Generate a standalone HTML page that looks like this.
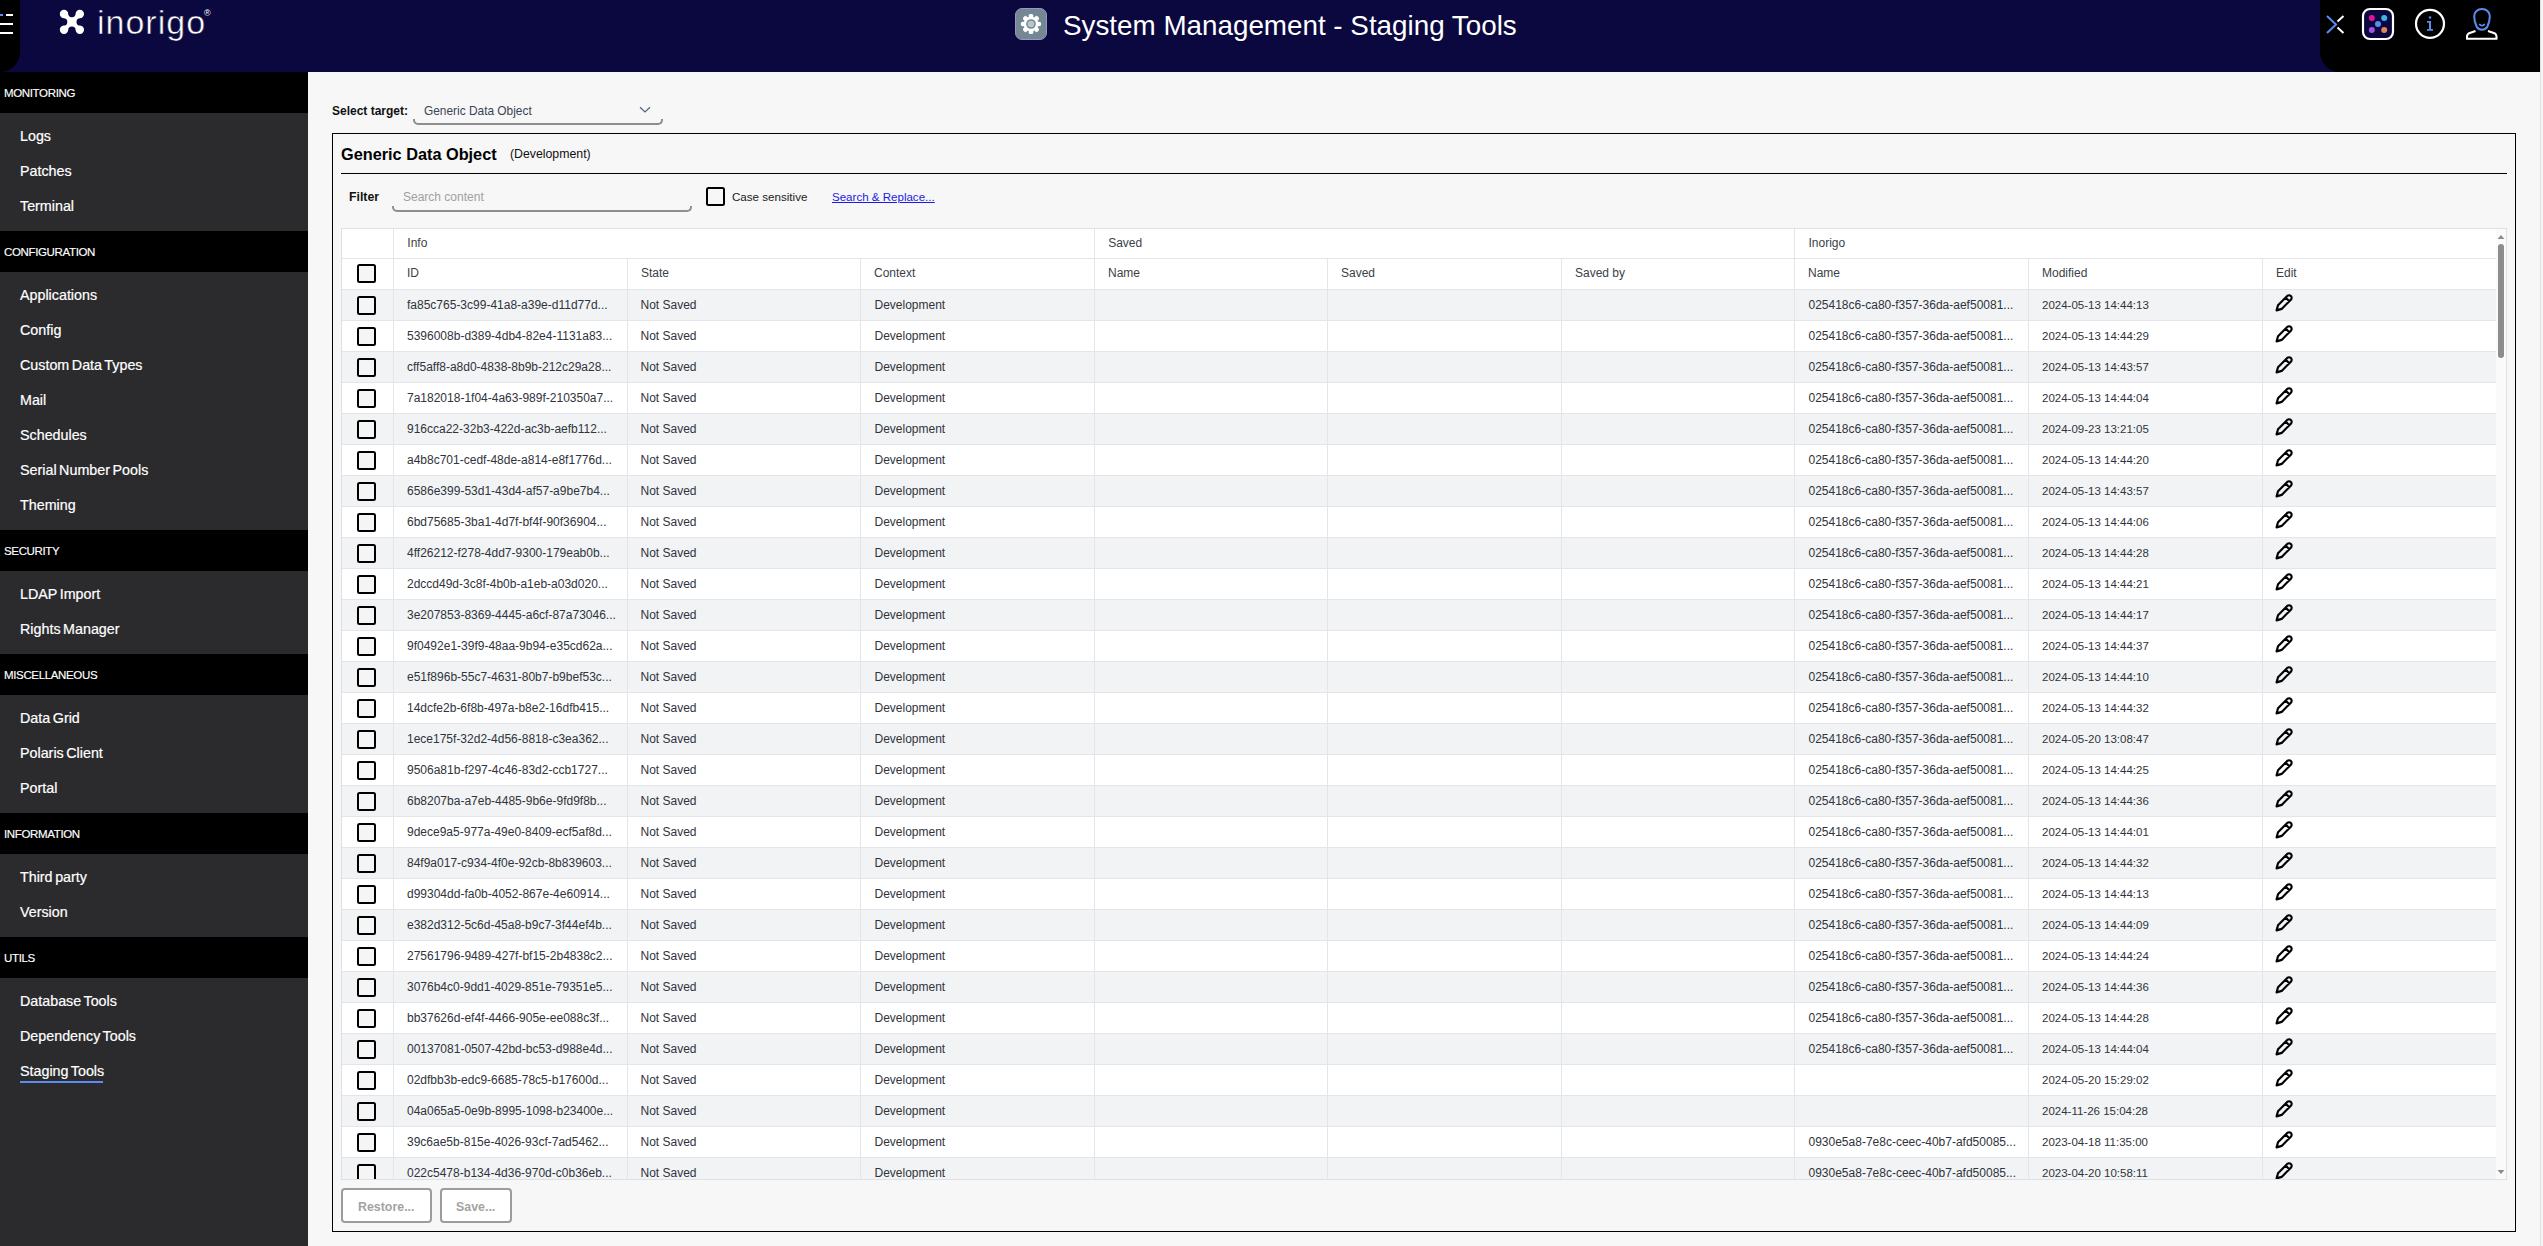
<!DOCTYPE html><html><head><meta charset="utf-8"><title>System Management - Staging Tools</title><style>
*{box-sizing:border-box;margin:0;padding:0}
html,body{width:2543px;height:1246px;overflow:hidden;background:#f7f7f7;font-family:"Liberation Sans",sans-serif;}
.a{position:absolute}
#hdr{left:0;top:0;width:2543px;height:72px;background:#0b0840}
#ltab{left:0;top:0;width:20px;height:72px;background:#000;border-bottom-right-radius:20px}
#rtab{left:2320px;top:0;width:220px;height:72px;background:#000;border-bottom-left-radius:20px}
#rstrip{left:2540px;top:0;width:3px;height:1246px;background:#f4f4f4;border-left:1px solid #e2e2e2}
.logo-t{left:97px;top:-2.8px;font-size:34px;color:#fff;letter-spacing:1px;font-weight:normal;line-height:50px;-webkit-text-stroke:0.55px #0b0840}
.title{left:1063px;top:9px;font-size:27.8px;color:#fff;line-height:34px;white-space:nowrap}
#side{left:0;top:72px;width:308px;height:1174px;background:#2b2b2d}
.sh{position:absolute;left:0;width:308px;height:41px;background:#000;color:#fff;font-size:11.5px;line-height:42px;padding-left:4px;letter-spacing:-0.35px;-webkit-text-stroke:0.15px #fff}
.si{position:absolute;left:20px;color:#fff;font-size:14.3px;word-spacing:-1.4px;-webkit-text-stroke:0.2px #fff;line-height:35px;white-space:nowrap}
.lbl{font-weight:bold;color:#111}
.cell{position:absolute;font-size:12px;color:#2f333b;white-space:nowrap;line-height:31px}
.hc{position:absolute;font-size:12px;color:#3b3f48;white-space:nowrap;line-height:30px}
.vl{position:absolute;width:1px;background:#e3e5ea}
.hl{position:absolute;height:1px;background:#e3e5ea}
.cb{position:absolute;width:19px;height:19px;border:2px solid #000;border-radius:2.5px;background:#f5f5f5}
</style></head><body>
<div id="hdr" class="a"></div>
<div id="ltab" class="a"></div>
<div class="a" style="left:0;top:14px;width:3px;height:2px;background:#5b8def"></div>
<div class="a" style="left:6px;top:14px;width:7px;height:2px;background:#fff"></div>
<div class="a" style="left:0;top:23px;width:13px;height:2px;background:#fff"></div>
<div class="a" style="left:0;top:32px;width:13px;height:2px;background:#fff"></div>
<svg class="a" style="left:54px;top:4px" width="40" height="40" viewBox="0 0 40 40">
<g fill="#fff" stroke="none"><circle cx="10" cy="10" r="4.2"/><circle cx="25.8" cy="10" r="4.2"/><circle cx="10" cy="25.8" r="4.2"/><circle cx="25.8" cy="25.8" r="4.2"/></g>
<g stroke="#fff" stroke-width="7" stroke-linecap="round"><line x1="10" y1="10" x2="25.8" y2="25.8"/><line x1="25.8" y1="10" x2="10" y2="25.8"/></g><g fill="#0b0840"><circle cx="17.9" cy="9.6" r="3.7"/><circle cx="9.6" cy="17.9" r="3.7"/><circle cx="26.2" cy="17.9" r="3.7"/><circle cx="17.9" cy="26.2" r="3.7"/></g></svg>
<div class="a logo-t">inorigo</div>
<div class="a" style="left:204px;top:7.5px;font-size:9px;color:#fff">&#174;</div>
<svg class="a" style="left:1014px;top:7px" width="34" height="34" viewBox="0 0 34 34">
<rect x="1.5" y="1.5" width="31" height="31" rx="6.5" fill="#738894" stroke="#9b95bd" stroke-width="1"/>
<g transform="translate(17,17)" fill="#fff">
<circle r="7.3"/>
<g id="tooth"><rect x="-2.3" y="-10.1" width="4.6" height="5" rx="1.7"/></g>
<use href="#tooth" transform="rotate(45)"/><use href="#tooth" transform="rotate(90)"/><use href="#tooth" transform="rotate(135)"/>
<use href="#tooth" transform="rotate(180)"/><use href="#tooth" transform="rotate(225)"/><use href="#tooth" transform="rotate(270)"/><use href="#tooth" transform="rotate(315)"/>
<circle r="4.8" fill="#738894"/><circle r="3.3" fill="#b9c4cb"/>
</g></svg>
<div class="a title">System Management - Staging Tools</div>
<div id="rtab" class="a"></div>
<svg class="a" style="left:2320px;top:0" width="220" height="50" viewBox="0 0 220 50">
<g stroke-width="2" fill="none">
<path d="M7 16 L16 24.5 L7 33" stroke="#5b8def"/>
<path d="M23.5 16 L17.5 21.5 M17.5 27.5 L23.5 33" stroke="#fff"/>
<rect x="43" y="9" width="30" height="30" rx="7" stroke="#fff" stroke-width="2.2" fill="#0b0840"/>
<circle cx="110" cy="23.8" r="14" stroke="#fff" stroke-width="2.2"/>
<path d="M156.6 26.5 C155 23 154.2 19 154.2 16.5 C154.2 11.8 157.6 8.9 162 8.9 C166.4 8.9 169.8 11.8 169.8 16.5 C169.8 19 169 23 167.4 26.5 C165.2 30.8 158.8 30.8 156.6 26.5 Z" stroke="#5b8def" stroke-width="2"/>
<path d="M159.2 24 Q162 27.3 164.8 24" stroke="#5b8def" stroke-width="1.8"/>
<path d="M155.5 31 L148.5 33.5 Q146.5 35 147 38.8 L176.5 38.8 Q177 35 175 33.5 L168 31" stroke="#fff" stroke-width="2"/>
</g>
<g stroke="none">
<circle cx="51.8" cy="18" r="3" fill="#e0139a"/><circle cx="64.2" cy="18" r="3" fill="#3db5e0"/>
<circle cx="58" cy="24" r="3" fill="#5b8def"/>
<circle cx="51.8" cy="30" r="3" fill="#a652e0"/><circle cx="64.2" cy="30" r="3" fill="#e08558"/>
<circle cx="110" cy="17.5" r="1.3" fill="#5b8def"/>
<path d="M107 21 L111 21 L111 29 L113 29 L113 30.8 L107 30.8 L107 29 L109 29 L109 22.8 L107 22.8 Z" fill="#5b8def"/>
</g></svg>
<div id="rstrip" class="a"></div>
<div id="side" class="a"></div>
<div class="sh" style="top:72.0px">MONITORING</div>
<div class="si" style="top:118.7px">Logs</div>
<div class="si" style="top:153.7px">Patches</div>
<div class="si" style="top:188.7px">Terminal</div>
<div class="sh" style="top:231.0px">CONFIGURATION</div>
<div class="si" style="top:277.7px">Applications</div>
<div class="si" style="top:312.7px">Config</div>
<div class="si" style="top:347.7px">Custom Data Types</div>
<div class="si" style="top:382.7px">Mail</div>
<div class="si" style="top:417.7px">Schedules</div>
<div class="si" style="top:452.7px">Serial Number Pools</div>
<div class="si" style="top:487.7px">Theming</div>
<div class="sh" style="top:530.0px">SECURITY</div>
<div class="si" style="top:576.7px">LDAP Import</div>
<div class="si" style="top:611.7px">Rights Manager</div>
<div class="sh" style="top:654.0px">MISCELLANEOUS</div>
<div class="si" style="top:700.7px">Data Grid</div>
<div class="si" style="top:735.7px">Polaris Client</div>
<div class="si" style="top:770.7px">Portal</div>
<div class="sh" style="top:813.0px">INFORMATION</div>
<div class="si" style="top:859.7px">Third party</div>
<div class="si" style="top:894.7px">Version</div>
<div class="sh" style="top:937.0px">UTILS</div>
<div class="si" style="top:983.7px">Database Tools</div>
<div class="si" style="top:1018.7px">Dependency Tools</div>
<div class="si" style="top:1053.7px">Staging Tools</div>
<div class="a" style="left:20px;top:1081.0px;width:83px;height:2px;background:#5b8def"></div>
<div class="a lbl" style="left:332px;top:103px;font-size:12px;line-height:16px">Select target:</div>
<div class="a" style="left:424px;top:103px;font-size:11.9px;line-height:16px;color:#3a4454">Generic Data Object</div>
<svg class="a" style="left:639px;top:106px" width="12" height="8" viewBox="0 0 12 8"><path d="M1 1.2 L6 6 L11 1.2" stroke="#56647c" stroke-width="1.2" fill="none"/></svg>
<div class="a" style="left:413px;top:119px;width:250px;height:6px;border:2px solid #8e8e8e;border-top:none;border-radius:0 0 5px 5px"></div>
<div class="a" style="left:332px;top:133px;width:2184px;height:1099px;border:1px solid #000"></div>
<div class="a" style="left:341px;top:143px;font-size:16.3px;font-weight:bold;color:#000;line-height:22px">Generic Data Object</div>
<div class="a" style="left:510px;top:145px;font-size:12.3px;color:#111;line-height:18px">(Development)</div>
<div class="a" style="left:341px;top:173px;width:2166px;height:1px;background:#000"></div>
<div class="a lbl" style="left:349px;top:189px;font-size:12.3px;line-height:16px">Filter</div>
<div class="a" style="left:403px;top:189px;font-size:12px;line-height:16px;color:#a0a0a0">Search content</div>
<div class="a" style="left:392px;top:206px;width:300px;height:6px;border:2px solid #8e8e8e;border-top:none;border-radius:0 0 5px 5px"></div>
<div class="a" style="left:706px;top:187px;width:19px;height:19px;border:2px solid #000;border-radius:2.5px"></div>
<div class="a" style="left:732px;top:189px;font-size:11.6px;line-height:16px;color:#222">Case sensitive</div>
<div class="a" style="left:832px;top:189px;font-size:11.55px;line-height:16px;color:#1a1ae6;text-decoration:underline">Search &amp; Replace...</div>
<div class="a" style="left:341px;top:228px;width:2166px;height:952px;background:#fff;border:1px solid #dde1e7;overflow:hidden">
<div class="a" style="left:0;top:60px;width:2154px;height:31px;background:#f2f3f5"></div>
<div class="hl" style="left:0;top:60px;width:2154px"></div>
<div class="cb" style="left:15px;top:67px"></div>
<div class="cell" style="left:65px;top:61px">fa85c765-3c99-41a8-a39e-d11d77d...</div>
<div class="cell" style="left:298.5px;top:61px">Not Saved</div>
<div class="cell" style="left:532.5px;top:61px">Development</div>
<div class="cell" style="left:1466.5px;top:61px">025418c6-ca80-f357-36da-aef50081...</div>
<div class="cell" style="left:1700px;top:61px;font-size:11.5px">2024-05-13 14:44:13</div>
<svg class="a" style="left:1933px;top:65px" width="18" height="18" viewBox="0 0 18 18"><path d="M1.6 16.4 L3 11.2 L12.2 2 A2.3 2.3 0 0 1 15.9 5.7 L6.7 14.9 Z M10.6 3.6 L14.3 7.3" stroke="#000" stroke-width="2.15" fill="none" stroke-linejoin="round"/></svg>
<div class="a" style="left:0;top:91px;width:2154px;height:31px;background:#fff"></div>
<div class="hl" style="left:0;top:91px;width:2154px"></div>
<div class="cb" style="left:15px;top:98px"></div>
<div class="cell" style="left:65px;top:92px">5396008b-d389-4db4-82e4-1131a83...</div>
<div class="cell" style="left:298.5px;top:92px">Not Saved</div>
<div class="cell" style="left:532.5px;top:92px">Development</div>
<div class="cell" style="left:1466.5px;top:92px">025418c6-ca80-f357-36da-aef50081...</div>
<div class="cell" style="left:1700px;top:92px;font-size:11.5px">2024-05-13 14:44:29</div>
<svg class="a" style="left:1933px;top:96px" width="18" height="18" viewBox="0 0 18 18"><path d="M1.6 16.4 L3 11.2 L12.2 2 A2.3 2.3 0 0 1 15.9 5.7 L6.7 14.9 Z M10.6 3.6 L14.3 7.3" stroke="#000" stroke-width="2.15" fill="none" stroke-linejoin="round"/></svg>
<div class="a" style="left:0;top:122px;width:2154px;height:31px;background:#f2f3f5"></div>
<div class="hl" style="left:0;top:122px;width:2154px"></div>
<div class="cb" style="left:15px;top:129px"></div>
<div class="cell" style="left:65px;top:123px">cff5aff8-a8d0-4838-8b9b-212c29a28...</div>
<div class="cell" style="left:298.5px;top:123px">Not Saved</div>
<div class="cell" style="left:532.5px;top:123px">Development</div>
<div class="cell" style="left:1466.5px;top:123px">025418c6-ca80-f357-36da-aef50081...</div>
<div class="cell" style="left:1700px;top:123px;font-size:11.5px">2024-05-13 14:43:57</div>
<svg class="a" style="left:1933px;top:127px" width="18" height="18" viewBox="0 0 18 18"><path d="M1.6 16.4 L3 11.2 L12.2 2 A2.3 2.3 0 0 1 15.9 5.7 L6.7 14.9 Z M10.6 3.6 L14.3 7.3" stroke="#000" stroke-width="2.15" fill="none" stroke-linejoin="round"/></svg>
<div class="a" style="left:0;top:153px;width:2154px;height:31px;background:#fff"></div>
<div class="hl" style="left:0;top:153px;width:2154px"></div>
<div class="cb" style="left:15px;top:160px"></div>
<div class="cell" style="left:65px;top:154px">7a182018-1f04-4a63-989f-210350a7...</div>
<div class="cell" style="left:298.5px;top:154px">Not Saved</div>
<div class="cell" style="left:532.5px;top:154px">Development</div>
<div class="cell" style="left:1466.5px;top:154px">025418c6-ca80-f357-36da-aef50081...</div>
<div class="cell" style="left:1700px;top:154px;font-size:11.5px">2024-05-13 14:44:04</div>
<svg class="a" style="left:1933px;top:158px" width="18" height="18" viewBox="0 0 18 18"><path d="M1.6 16.4 L3 11.2 L12.2 2 A2.3 2.3 0 0 1 15.9 5.7 L6.7 14.9 Z M10.6 3.6 L14.3 7.3" stroke="#000" stroke-width="2.15" fill="none" stroke-linejoin="round"/></svg>
<div class="a" style="left:0;top:184px;width:2154px;height:31px;background:#f2f3f5"></div>
<div class="hl" style="left:0;top:184px;width:2154px"></div>
<div class="cb" style="left:15px;top:191px"></div>
<div class="cell" style="left:65px;top:185px">916cca22-32b3-422d-ac3b-aefb112...</div>
<div class="cell" style="left:298.5px;top:185px">Not Saved</div>
<div class="cell" style="left:532.5px;top:185px">Development</div>
<div class="cell" style="left:1466.5px;top:185px">025418c6-ca80-f357-36da-aef50081...</div>
<div class="cell" style="left:1700px;top:185px;font-size:11.5px">2024-09-23 13:21:05</div>
<svg class="a" style="left:1933px;top:189px" width="18" height="18" viewBox="0 0 18 18"><path d="M1.6 16.4 L3 11.2 L12.2 2 A2.3 2.3 0 0 1 15.9 5.7 L6.7 14.9 Z M10.6 3.6 L14.3 7.3" stroke="#000" stroke-width="2.15" fill="none" stroke-linejoin="round"/></svg>
<div class="a" style="left:0;top:215px;width:2154px;height:31px;background:#fff"></div>
<div class="hl" style="left:0;top:215px;width:2154px"></div>
<div class="cb" style="left:15px;top:222px"></div>
<div class="cell" style="left:65px;top:216px">a4b8c701-cedf-48de-a814-e8f1776d...</div>
<div class="cell" style="left:298.5px;top:216px">Not Saved</div>
<div class="cell" style="left:532.5px;top:216px">Development</div>
<div class="cell" style="left:1466.5px;top:216px">025418c6-ca80-f357-36da-aef50081...</div>
<div class="cell" style="left:1700px;top:216px;font-size:11.5px">2024-05-13 14:44:20</div>
<svg class="a" style="left:1933px;top:220px" width="18" height="18" viewBox="0 0 18 18"><path d="M1.6 16.4 L3 11.2 L12.2 2 A2.3 2.3 0 0 1 15.9 5.7 L6.7 14.9 Z M10.6 3.6 L14.3 7.3" stroke="#000" stroke-width="2.15" fill="none" stroke-linejoin="round"/></svg>
<div class="a" style="left:0;top:246px;width:2154px;height:31px;background:#f2f3f5"></div>
<div class="hl" style="left:0;top:246px;width:2154px"></div>
<div class="cb" style="left:15px;top:253px"></div>
<div class="cell" style="left:65px;top:247px">6586e399-53d1-43d4-af57-a9be7b4...</div>
<div class="cell" style="left:298.5px;top:247px">Not Saved</div>
<div class="cell" style="left:532.5px;top:247px">Development</div>
<div class="cell" style="left:1466.5px;top:247px">025418c6-ca80-f357-36da-aef50081...</div>
<div class="cell" style="left:1700px;top:247px;font-size:11.5px">2024-05-13 14:43:57</div>
<svg class="a" style="left:1933px;top:251px" width="18" height="18" viewBox="0 0 18 18"><path d="M1.6 16.4 L3 11.2 L12.2 2 A2.3 2.3 0 0 1 15.9 5.7 L6.7 14.9 Z M10.6 3.6 L14.3 7.3" stroke="#000" stroke-width="2.15" fill="none" stroke-linejoin="round"/></svg>
<div class="a" style="left:0;top:277px;width:2154px;height:31px;background:#fff"></div>
<div class="hl" style="left:0;top:277px;width:2154px"></div>
<div class="cb" style="left:15px;top:284px"></div>
<div class="cell" style="left:65px;top:278px">6bd75685-3ba1-4d7f-bf4f-90f36904...</div>
<div class="cell" style="left:298.5px;top:278px">Not Saved</div>
<div class="cell" style="left:532.5px;top:278px">Development</div>
<div class="cell" style="left:1466.5px;top:278px">025418c6-ca80-f357-36da-aef50081...</div>
<div class="cell" style="left:1700px;top:278px;font-size:11.5px">2024-05-13 14:44:06</div>
<svg class="a" style="left:1933px;top:282px" width="18" height="18" viewBox="0 0 18 18"><path d="M1.6 16.4 L3 11.2 L12.2 2 A2.3 2.3 0 0 1 15.9 5.7 L6.7 14.9 Z M10.6 3.6 L14.3 7.3" stroke="#000" stroke-width="2.15" fill="none" stroke-linejoin="round"/></svg>
<div class="a" style="left:0;top:308px;width:2154px;height:31px;background:#f2f3f5"></div>
<div class="hl" style="left:0;top:308px;width:2154px"></div>
<div class="cb" style="left:15px;top:315px"></div>
<div class="cell" style="left:65px;top:309px">4ff26212-f278-4dd7-9300-179eab0b...</div>
<div class="cell" style="left:298.5px;top:309px">Not Saved</div>
<div class="cell" style="left:532.5px;top:309px">Development</div>
<div class="cell" style="left:1466.5px;top:309px">025418c6-ca80-f357-36da-aef50081...</div>
<div class="cell" style="left:1700px;top:309px;font-size:11.5px">2024-05-13 14:44:28</div>
<svg class="a" style="left:1933px;top:313px" width="18" height="18" viewBox="0 0 18 18"><path d="M1.6 16.4 L3 11.2 L12.2 2 A2.3 2.3 0 0 1 15.9 5.7 L6.7 14.9 Z M10.6 3.6 L14.3 7.3" stroke="#000" stroke-width="2.15" fill="none" stroke-linejoin="round"/></svg>
<div class="a" style="left:0;top:339px;width:2154px;height:31px;background:#fff"></div>
<div class="hl" style="left:0;top:339px;width:2154px"></div>
<div class="cb" style="left:15px;top:346px"></div>
<div class="cell" style="left:65px;top:340px">2dccd49d-3c8f-4b0b-a1eb-a03d020...</div>
<div class="cell" style="left:298.5px;top:340px">Not Saved</div>
<div class="cell" style="left:532.5px;top:340px">Development</div>
<div class="cell" style="left:1466.5px;top:340px">025418c6-ca80-f357-36da-aef50081...</div>
<div class="cell" style="left:1700px;top:340px;font-size:11.5px">2024-05-13 14:44:21</div>
<svg class="a" style="left:1933px;top:344px" width="18" height="18" viewBox="0 0 18 18"><path d="M1.6 16.4 L3 11.2 L12.2 2 A2.3 2.3 0 0 1 15.9 5.7 L6.7 14.9 Z M10.6 3.6 L14.3 7.3" stroke="#000" stroke-width="2.15" fill="none" stroke-linejoin="round"/></svg>
<div class="a" style="left:0;top:370px;width:2154px;height:31px;background:#f2f3f5"></div>
<div class="hl" style="left:0;top:370px;width:2154px"></div>
<div class="cb" style="left:15px;top:377px"></div>
<div class="cell" style="left:65px;top:371px">3e207853-8369-4445-a6cf-87a73046...</div>
<div class="cell" style="left:298.5px;top:371px">Not Saved</div>
<div class="cell" style="left:532.5px;top:371px">Development</div>
<div class="cell" style="left:1466.5px;top:371px">025418c6-ca80-f357-36da-aef50081...</div>
<div class="cell" style="left:1700px;top:371px;font-size:11.5px">2024-05-13 14:44:17</div>
<svg class="a" style="left:1933px;top:375px" width="18" height="18" viewBox="0 0 18 18"><path d="M1.6 16.4 L3 11.2 L12.2 2 A2.3 2.3 0 0 1 15.9 5.7 L6.7 14.9 Z M10.6 3.6 L14.3 7.3" stroke="#000" stroke-width="2.15" fill="none" stroke-linejoin="round"/></svg>
<div class="a" style="left:0;top:401px;width:2154px;height:31px;background:#fff"></div>
<div class="hl" style="left:0;top:401px;width:2154px"></div>
<div class="cb" style="left:15px;top:408px"></div>
<div class="cell" style="left:65px;top:402px">9f0492e1-39f9-48aa-9b94-e35cd62a...</div>
<div class="cell" style="left:298.5px;top:402px">Not Saved</div>
<div class="cell" style="left:532.5px;top:402px">Development</div>
<div class="cell" style="left:1466.5px;top:402px">025418c6-ca80-f357-36da-aef50081...</div>
<div class="cell" style="left:1700px;top:402px;font-size:11.5px">2024-05-13 14:44:37</div>
<svg class="a" style="left:1933px;top:406px" width="18" height="18" viewBox="0 0 18 18"><path d="M1.6 16.4 L3 11.2 L12.2 2 A2.3 2.3 0 0 1 15.9 5.7 L6.7 14.9 Z M10.6 3.6 L14.3 7.3" stroke="#000" stroke-width="2.15" fill="none" stroke-linejoin="round"/></svg>
<div class="a" style="left:0;top:432px;width:2154px;height:31px;background:#f2f3f5"></div>
<div class="hl" style="left:0;top:432px;width:2154px"></div>
<div class="cb" style="left:15px;top:439px"></div>
<div class="cell" style="left:65px;top:433px">e51f896b-55c7-4631-80b7-b9bef53c...</div>
<div class="cell" style="left:298.5px;top:433px">Not Saved</div>
<div class="cell" style="left:532.5px;top:433px">Development</div>
<div class="cell" style="left:1466.5px;top:433px">025418c6-ca80-f357-36da-aef50081...</div>
<div class="cell" style="left:1700px;top:433px;font-size:11.5px">2024-05-13 14:44:10</div>
<svg class="a" style="left:1933px;top:437px" width="18" height="18" viewBox="0 0 18 18"><path d="M1.6 16.4 L3 11.2 L12.2 2 A2.3 2.3 0 0 1 15.9 5.7 L6.7 14.9 Z M10.6 3.6 L14.3 7.3" stroke="#000" stroke-width="2.15" fill="none" stroke-linejoin="round"/></svg>
<div class="a" style="left:0;top:463px;width:2154px;height:31px;background:#fff"></div>
<div class="hl" style="left:0;top:463px;width:2154px"></div>
<div class="cb" style="left:15px;top:470px"></div>
<div class="cell" style="left:65px;top:464px">14dcfe2b-6f8b-497a-b8e2-16dfb415...</div>
<div class="cell" style="left:298.5px;top:464px">Not Saved</div>
<div class="cell" style="left:532.5px;top:464px">Development</div>
<div class="cell" style="left:1466.5px;top:464px">025418c6-ca80-f357-36da-aef50081...</div>
<div class="cell" style="left:1700px;top:464px;font-size:11.5px">2024-05-13 14:44:32</div>
<svg class="a" style="left:1933px;top:468px" width="18" height="18" viewBox="0 0 18 18"><path d="M1.6 16.4 L3 11.2 L12.2 2 A2.3 2.3 0 0 1 15.9 5.7 L6.7 14.9 Z M10.6 3.6 L14.3 7.3" stroke="#000" stroke-width="2.15" fill="none" stroke-linejoin="round"/></svg>
<div class="a" style="left:0;top:494px;width:2154px;height:31px;background:#f2f3f5"></div>
<div class="hl" style="left:0;top:494px;width:2154px"></div>
<div class="cb" style="left:15px;top:501px"></div>
<div class="cell" style="left:65px;top:495px">1ece175f-32d2-4d56-8818-c3ea362...</div>
<div class="cell" style="left:298.5px;top:495px">Not Saved</div>
<div class="cell" style="left:532.5px;top:495px">Development</div>
<div class="cell" style="left:1466.5px;top:495px">025418c6-ca80-f357-36da-aef50081...</div>
<div class="cell" style="left:1700px;top:495px;font-size:11.5px">2024-05-20 13:08:47</div>
<svg class="a" style="left:1933px;top:499px" width="18" height="18" viewBox="0 0 18 18"><path d="M1.6 16.4 L3 11.2 L12.2 2 A2.3 2.3 0 0 1 15.9 5.7 L6.7 14.9 Z M10.6 3.6 L14.3 7.3" stroke="#000" stroke-width="2.15" fill="none" stroke-linejoin="round"/></svg>
<div class="a" style="left:0;top:525px;width:2154px;height:31px;background:#fff"></div>
<div class="hl" style="left:0;top:525px;width:2154px"></div>
<div class="cb" style="left:15px;top:532px"></div>
<div class="cell" style="left:65px;top:526px">9506a81b-f297-4c46-83d2-ccb1727...</div>
<div class="cell" style="left:298.5px;top:526px">Not Saved</div>
<div class="cell" style="left:532.5px;top:526px">Development</div>
<div class="cell" style="left:1466.5px;top:526px">025418c6-ca80-f357-36da-aef50081...</div>
<div class="cell" style="left:1700px;top:526px;font-size:11.5px">2024-05-13 14:44:25</div>
<svg class="a" style="left:1933px;top:530px" width="18" height="18" viewBox="0 0 18 18"><path d="M1.6 16.4 L3 11.2 L12.2 2 A2.3 2.3 0 0 1 15.9 5.7 L6.7 14.9 Z M10.6 3.6 L14.3 7.3" stroke="#000" stroke-width="2.15" fill="none" stroke-linejoin="round"/></svg>
<div class="a" style="left:0;top:556px;width:2154px;height:31px;background:#f2f3f5"></div>
<div class="hl" style="left:0;top:556px;width:2154px"></div>
<div class="cb" style="left:15px;top:563px"></div>
<div class="cell" style="left:65px;top:557px">6b8207ba-a7eb-4485-9b6e-9fd9f8b...</div>
<div class="cell" style="left:298.5px;top:557px">Not Saved</div>
<div class="cell" style="left:532.5px;top:557px">Development</div>
<div class="cell" style="left:1466.5px;top:557px">025418c6-ca80-f357-36da-aef50081...</div>
<div class="cell" style="left:1700px;top:557px;font-size:11.5px">2024-05-13 14:44:36</div>
<svg class="a" style="left:1933px;top:561px" width="18" height="18" viewBox="0 0 18 18"><path d="M1.6 16.4 L3 11.2 L12.2 2 A2.3 2.3 0 0 1 15.9 5.7 L6.7 14.9 Z M10.6 3.6 L14.3 7.3" stroke="#000" stroke-width="2.15" fill="none" stroke-linejoin="round"/></svg>
<div class="a" style="left:0;top:587px;width:2154px;height:31px;background:#fff"></div>
<div class="hl" style="left:0;top:587px;width:2154px"></div>
<div class="cb" style="left:15px;top:594px"></div>
<div class="cell" style="left:65px;top:588px">9dece9a5-977a-49e0-8409-ecf5af8d...</div>
<div class="cell" style="left:298.5px;top:588px">Not Saved</div>
<div class="cell" style="left:532.5px;top:588px">Development</div>
<div class="cell" style="left:1466.5px;top:588px">025418c6-ca80-f357-36da-aef50081...</div>
<div class="cell" style="left:1700px;top:588px;font-size:11.5px">2024-05-13 14:44:01</div>
<svg class="a" style="left:1933px;top:592px" width="18" height="18" viewBox="0 0 18 18"><path d="M1.6 16.4 L3 11.2 L12.2 2 A2.3 2.3 0 0 1 15.9 5.7 L6.7 14.9 Z M10.6 3.6 L14.3 7.3" stroke="#000" stroke-width="2.15" fill="none" stroke-linejoin="round"/></svg>
<div class="a" style="left:0;top:618px;width:2154px;height:31px;background:#f2f3f5"></div>
<div class="hl" style="left:0;top:618px;width:2154px"></div>
<div class="cb" style="left:15px;top:625px"></div>
<div class="cell" style="left:65px;top:619px">84f9a017-c934-4f0e-92cb-8b839603...</div>
<div class="cell" style="left:298.5px;top:619px">Not Saved</div>
<div class="cell" style="left:532.5px;top:619px">Development</div>
<div class="cell" style="left:1466.5px;top:619px">025418c6-ca80-f357-36da-aef50081...</div>
<div class="cell" style="left:1700px;top:619px;font-size:11.5px">2024-05-13 14:44:32</div>
<svg class="a" style="left:1933px;top:623px" width="18" height="18" viewBox="0 0 18 18"><path d="M1.6 16.4 L3 11.2 L12.2 2 A2.3 2.3 0 0 1 15.9 5.7 L6.7 14.9 Z M10.6 3.6 L14.3 7.3" stroke="#000" stroke-width="2.15" fill="none" stroke-linejoin="round"/></svg>
<div class="a" style="left:0;top:649px;width:2154px;height:31px;background:#fff"></div>
<div class="hl" style="left:0;top:649px;width:2154px"></div>
<div class="cb" style="left:15px;top:656px"></div>
<div class="cell" style="left:65px;top:650px">d99304dd-fa0b-4052-867e-4e60914...</div>
<div class="cell" style="left:298.5px;top:650px">Not Saved</div>
<div class="cell" style="left:532.5px;top:650px">Development</div>
<div class="cell" style="left:1466.5px;top:650px">025418c6-ca80-f357-36da-aef50081...</div>
<div class="cell" style="left:1700px;top:650px;font-size:11.5px">2024-05-13 14:44:13</div>
<svg class="a" style="left:1933px;top:654px" width="18" height="18" viewBox="0 0 18 18"><path d="M1.6 16.4 L3 11.2 L12.2 2 A2.3 2.3 0 0 1 15.9 5.7 L6.7 14.9 Z M10.6 3.6 L14.3 7.3" stroke="#000" stroke-width="2.15" fill="none" stroke-linejoin="round"/></svg>
<div class="a" style="left:0;top:680px;width:2154px;height:31px;background:#f2f3f5"></div>
<div class="hl" style="left:0;top:680px;width:2154px"></div>
<div class="cb" style="left:15px;top:687px"></div>
<div class="cell" style="left:65px;top:681px">e382d312-5c6d-45a8-b9c7-3f44ef4b...</div>
<div class="cell" style="left:298.5px;top:681px">Not Saved</div>
<div class="cell" style="left:532.5px;top:681px">Development</div>
<div class="cell" style="left:1466.5px;top:681px">025418c6-ca80-f357-36da-aef50081...</div>
<div class="cell" style="left:1700px;top:681px;font-size:11.5px">2024-05-13 14:44:09</div>
<svg class="a" style="left:1933px;top:685px" width="18" height="18" viewBox="0 0 18 18"><path d="M1.6 16.4 L3 11.2 L12.2 2 A2.3 2.3 0 0 1 15.9 5.7 L6.7 14.9 Z M10.6 3.6 L14.3 7.3" stroke="#000" stroke-width="2.15" fill="none" stroke-linejoin="round"/></svg>
<div class="a" style="left:0;top:711px;width:2154px;height:31px;background:#fff"></div>
<div class="hl" style="left:0;top:711px;width:2154px"></div>
<div class="cb" style="left:15px;top:718px"></div>
<div class="cell" style="left:65px;top:712px">27561796-9489-427f-bf15-2b4838c2...</div>
<div class="cell" style="left:298.5px;top:712px">Not Saved</div>
<div class="cell" style="left:532.5px;top:712px">Development</div>
<div class="cell" style="left:1466.5px;top:712px">025418c6-ca80-f357-36da-aef50081...</div>
<div class="cell" style="left:1700px;top:712px;font-size:11.5px">2024-05-13 14:44:24</div>
<svg class="a" style="left:1933px;top:716px" width="18" height="18" viewBox="0 0 18 18"><path d="M1.6 16.4 L3 11.2 L12.2 2 A2.3 2.3 0 0 1 15.9 5.7 L6.7 14.9 Z M10.6 3.6 L14.3 7.3" stroke="#000" stroke-width="2.15" fill="none" stroke-linejoin="round"/></svg>
<div class="a" style="left:0;top:742px;width:2154px;height:31px;background:#f2f3f5"></div>
<div class="hl" style="left:0;top:742px;width:2154px"></div>
<div class="cb" style="left:15px;top:749px"></div>
<div class="cell" style="left:65px;top:743px">3076b4c0-9dd1-4029-851e-79351e5...</div>
<div class="cell" style="left:298.5px;top:743px">Not Saved</div>
<div class="cell" style="left:532.5px;top:743px">Development</div>
<div class="cell" style="left:1466.5px;top:743px">025418c6-ca80-f357-36da-aef50081...</div>
<div class="cell" style="left:1700px;top:743px;font-size:11.5px">2024-05-13 14:44:36</div>
<svg class="a" style="left:1933px;top:747px" width="18" height="18" viewBox="0 0 18 18"><path d="M1.6 16.4 L3 11.2 L12.2 2 A2.3 2.3 0 0 1 15.9 5.7 L6.7 14.9 Z M10.6 3.6 L14.3 7.3" stroke="#000" stroke-width="2.15" fill="none" stroke-linejoin="round"/></svg>
<div class="a" style="left:0;top:773px;width:2154px;height:31px;background:#fff"></div>
<div class="hl" style="left:0;top:773px;width:2154px"></div>
<div class="cb" style="left:15px;top:780px"></div>
<div class="cell" style="left:65px;top:774px">bb37626d-ef4f-4466-905e-ee088c3f...</div>
<div class="cell" style="left:298.5px;top:774px">Not Saved</div>
<div class="cell" style="left:532.5px;top:774px">Development</div>
<div class="cell" style="left:1466.5px;top:774px">025418c6-ca80-f357-36da-aef50081...</div>
<div class="cell" style="left:1700px;top:774px;font-size:11.5px">2024-05-13 14:44:28</div>
<svg class="a" style="left:1933px;top:778px" width="18" height="18" viewBox="0 0 18 18"><path d="M1.6 16.4 L3 11.2 L12.2 2 A2.3 2.3 0 0 1 15.9 5.7 L6.7 14.9 Z M10.6 3.6 L14.3 7.3" stroke="#000" stroke-width="2.15" fill="none" stroke-linejoin="round"/></svg>
<div class="a" style="left:0;top:804px;width:2154px;height:31px;background:#f2f3f5"></div>
<div class="hl" style="left:0;top:804px;width:2154px"></div>
<div class="cb" style="left:15px;top:811px"></div>
<div class="cell" style="left:65px;top:805px">00137081-0507-42bd-bc53-d988e4d...</div>
<div class="cell" style="left:298.5px;top:805px">Not Saved</div>
<div class="cell" style="left:532.5px;top:805px">Development</div>
<div class="cell" style="left:1466.5px;top:805px">025418c6-ca80-f357-36da-aef50081...</div>
<div class="cell" style="left:1700px;top:805px;font-size:11.5px">2024-05-13 14:44:04</div>
<svg class="a" style="left:1933px;top:809px" width="18" height="18" viewBox="0 0 18 18"><path d="M1.6 16.4 L3 11.2 L12.2 2 A2.3 2.3 0 0 1 15.9 5.7 L6.7 14.9 Z M10.6 3.6 L14.3 7.3" stroke="#000" stroke-width="2.15" fill="none" stroke-linejoin="round"/></svg>
<div class="a" style="left:0;top:835px;width:2154px;height:31px;background:#fff"></div>
<div class="hl" style="left:0;top:835px;width:2154px"></div>
<div class="cb" style="left:15px;top:842px"></div>
<div class="cell" style="left:65px;top:836px">02dfbb3b-edc9-6685-78c5-b17600d...</div>
<div class="cell" style="left:298.5px;top:836px">Not Saved</div>
<div class="cell" style="left:532.5px;top:836px">Development</div>
<div class="cell" style="left:1700px;top:836px;font-size:11.5px">2024-05-20 15:29:02</div>
<svg class="a" style="left:1933px;top:840px" width="18" height="18" viewBox="0 0 18 18"><path d="M1.6 16.4 L3 11.2 L12.2 2 A2.3 2.3 0 0 1 15.9 5.7 L6.7 14.9 Z M10.6 3.6 L14.3 7.3" stroke="#000" stroke-width="2.15" fill="none" stroke-linejoin="round"/></svg>
<div class="a" style="left:0;top:866px;width:2154px;height:31px;background:#f2f3f5"></div>
<div class="hl" style="left:0;top:866px;width:2154px"></div>
<div class="cb" style="left:15px;top:873px"></div>
<div class="cell" style="left:65px;top:867px">04a065a5-0e9b-8995-1098-b23400e...</div>
<div class="cell" style="left:298.5px;top:867px">Not Saved</div>
<div class="cell" style="left:532.5px;top:867px">Development</div>
<div class="cell" style="left:1700px;top:867px;font-size:11.5px">2024-11-26 15:04:28</div>
<svg class="a" style="left:1933px;top:871px" width="18" height="18" viewBox="0 0 18 18"><path d="M1.6 16.4 L3 11.2 L12.2 2 A2.3 2.3 0 0 1 15.9 5.7 L6.7 14.9 Z M10.6 3.6 L14.3 7.3" stroke="#000" stroke-width="2.15" fill="none" stroke-linejoin="round"/></svg>
<div class="a" style="left:0;top:897px;width:2154px;height:31px;background:#fff"></div>
<div class="hl" style="left:0;top:897px;width:2154px"></div>
<div class="cb" style="left:15px;top:904px"></div>
<div class="cell" style="left:65px;top:898px">39c6ae5b-815e-4026-93cf-7ad5462...</div>
<div class="cell" style="left:298.5px;top:898px">Not Saved</div>
<div class="cell" style="left:532.5px;top:898px">Development</div>
<div class="cell" style="left:1466.5px;top:898px">0930e5a8-7e8c-ceec-40b7-afd50085...</div>
<div class="cell" style="left:1700px;top:898px;font-size:11.5px">2023-04-18 11:35:00</div>
<svg class="a" style="left:1933px;top:902px" width="18" height="18" viewBox="0 0 18 18"><path d="M1.6 16.4 L3 11.2 L12.2 2 A2.3 2.3 0 0 1 15.9 5.7 L6.7 14.9 Z M10.6 3.6 L14.3 7.3" stroke="#000" stroke-width="2.15" fill="none" stroke-linejoin="round"/></svg>
<div class="a" style="left:0;top:928px;width:2154px;height:31px;background:#f2f3f5"></div>
<div class="hl" style="left:0;top:928px;width:2154px"></div>
<div class="cb" style="left:15px;top:935px"></div>
<div class="cell" style="left:65px;top:929px">022c5478-b134-4d36-970d-c0b36eb...</div>
<div class="cell" style="left:298.5px;top:929px">Not Saved</div>
<div class="cell" style="left:532.5px;top:929px">Development</div>
<div class="cell" style="left:1466.5px;top:929px">0930e5a8-7e8c-ceec-40b7-afd50085...</div>
<div class="cell" style="left:1700px;top:929px;font-size:11.5px">2023-04-20 10:58:11</div>
<svg class="a" style="left:1933px;top:933px" width="18" height="18" viewBox="0 0 18 18"><path d="M1.6 16.4 L3 11.2 L12.2 2 A2.3 2.3 0 0 1 15.9 5.7 L6.7 14.9 Z M10.6 3.6 L14.3 7.3" stroke="#000" stroke-width="2.15" fill="none" stroke-linejoin="round"/></svg>
<div class="a" style="left:0;top:0;width:2154px;height:60px;background:#fff"></div>
<div class="hl" style="left:0;top:29px;width:2154px"></div>
<div class="hl" style="left:0;top:60px;width:2154px"></div>
<div class="hc" style="left:65.30000000000001px;top:-1px">Info</div>
<div class="hc" style="left:766.2px;top:-1px">Saved</div>
<div class="hc" style="left:1466.5px;top:-1px">Inorigo</div>
<div class="hc" style="left:65px;top:29px">ID</div>
<div class="hc" style="left:299px;top:29px">State</div>
<div class="hc" style="left:532px;top:29px">Context</div>
<div class="hc" style="left:766px;top:29px">Name</div>
<div class="hc" style="left:999px;top:29px">Saved</div>
<div class="hc" style="left:1233px;top:29px">Saved by</div>
<div class="hc" style="left:1466px;top:29px">Name</div>
<div class="hc" style="left:1700px;top:29px">Modified</div>
<div class="hc" style="left:1934px;top:29px">Edit</div>
<div class="cb" style="left:15px;top:35px"></div>
<div class="vl" style="left:51px;top:0;height:951px"></div>
<div class="vl" style="left:285px;top:30px;height:920px"></div>
<div class="vl" style="left:518px;top:30px;height:920px"></div>
<div class="vl" style="left:752px;top:0;height:951px"></div>
<div class="vl" style="left:985px;top:30px;height:920px"></div>
<div class="vl" style="left:1219px;top:30px;height:920px"></div>
<div class="vl" style="left:1452px;top:0;height:951px"></div>
<div class="vl" style="left:1686px;top:30px;height:920px"></div>
<div class="vl" style="left:1920px;top:30px;height:920px"></div>
<div class="a" style="left:2154px;top:0;width:10px;height:951px;background:#fafafa"></div>
<svg class="a" style="left:2154px;top:3px" width="10" height="8" viewBox="0 0 10 8"><path d="M1.5 7 L5 3 L8.5 7 Z" fill="#8c8c8c"/></svg>
<div class="a" style="left:2156px;top:15px;width:6px;height:114px;background:#8c8c8c;border-radius:3px"></div>
<svg class="a" style="left:2154px;top:939px" width="10" height="8" viewBox="0 0 10 8"><path d="M1.5 2 L5 6 L8.5 2 Z" fill="#8c8c8c"/></svg>
</div>
<div class="a" style="left:341px;top:1188px;width:91px;height:35px;border:2px solid #9c9c9c;border-radius:4px;background:#fff"></div>
<div class="a" style="left:440px;top:1188px;width:72px;height:35px;border:2px solid #9c9c9c;border-radius:4px;background:#fff"></div>
<div class="a" style="left:358px;top:1198.5px;font-size:12.4px;font-weight:bold;color:#a3a3a3;line-height:16px">Restore...</div>
<div class="a" style="left:456px;top:1198.5px;font-size:12.4px;font-weight:bold;color:#a3a3a3;line-height:16px">Save...</div>
</body></html>
